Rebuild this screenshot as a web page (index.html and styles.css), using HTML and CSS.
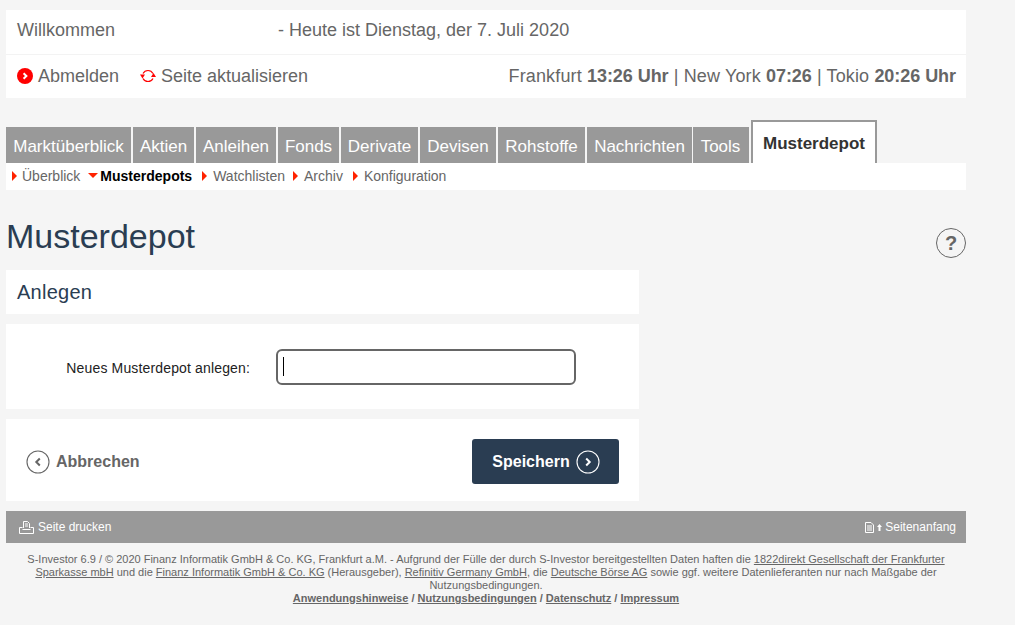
FILE: index.html
```html
<!DOCTYPE html>
<html lang="de">
<head>
<meta charset="utf-8">
<title>Musterdepot</title>
<link rel="stylesheet" href="styles.css">
</head>
<body>
<div class="page">
  <div class="wrap">
    <header class="top">
      <div class="top-row1">
        <span class="welcome">Willkommen</span>
        <span>- Heute ist Dienstag, der 7. Juli 2020</span>
      </div>
      <div class="top-row2">
        <a class="tool first">
          <svg class="ico-logout" viewBox="0 0 16 16"><circle cx="8" cy="8" r="8" fill="#f00"/><path d="M6.600 5.200 9.400 8 6.600 10.800" fill="none" stroke="#fff" stroke-width="2"/></svg>
          Abmelden</a>
        <a class="tool second">
          <svg class="ico-refresh" viewBox="0 0 16 16"><path d="M3 5.600A5.600 5.600 0 0 1 13 5.600M13 10.400A5.600 5.600 0 0 1 3 10.400" fill="none" stroke="#f00" stroke-width="1.200"/><path d="M0 6.500H5L2.500 10.500ZM16 9H11L13.500 5Z" fill="#f00"/></svg>
          Seite aktualisieren</a>
        <span class="clock">Frankfurt <b>13:26 Uhr</b> | New York <b>07:26</b> | Tokio <b>20:26 Uhr</b></span>
      </div>
    </header>

    <nav class="tabs">
      <a class="tab w1">Marktüberblick</a>
      <a class="tab w2">Aktien</a>
      <a class="tab w3">Anleihen</a>
      <a class="tab w4">Fonds</a>
      <a class="tab w5">Derivate</a>
      <a class="tab w6">Devisen</a>
      <a class="tab w7">Rohstoffe</a>
      <a class="tab w8">Nachrichten</a>
      <a class="tab w9">Tools</a>
      <a class="tab active">Musterdepot</a>
    </nav>
    <nav class="subnav">
      <a class="sub"><i class="arrow-r"></i>Überblick</a>
      <a class="sub current"><i class="arrow-d"></i>Musterdepots</a>
      <a class="sub"><i class="arrow-r"></i>Watchlisten</a>
      <a class="sub"><i class="arrow-r"></i>Archiv</a>
      <a class="sub"><i class="arrow-r"></i>Konfiguration</a>
    </nav>

    <div class="title-row">
      <h1>Musterdepot</h1>
      <span class="help">?</span>
    </div>

    <main class="col">
      <h2 class="panel head">Anlegen</h2>
      <div class="panel form">
        <label class="lbl">Neues Musterdepot anlegen:</label>
        <div class="input"><span class="caret"></span></div>
      </div>
      <div class="panel actions">
        <a class="cancel">
          <svg class="ico-circle" viewBox="0 0 24 24"><circle cx="12" cy="12" r="11" fill="none" stroke="#666" stroke-width="1.100"/><path d="M13.800 8.500 10.300 12 13.800 15.500" fill="none" stroke="#666" stroke-width="2"/></svg>
          Abbrechen</a>
        <a class="save">Speichern
          <svg class="ico-circle" viewBox="0 0 24 24"><circle cx="12" cy="12" r="11" fill="none" stroke="#fff" stroke-width="1.100"/><path d="M10.200 8.500 13.700 12 10.200 15.500" fill="none" stroke="#fff" stroke-width="2"/></svg>
        </a>
      </div>
    </main>

    <div class="bar">
      <a class="bar-link">
        <svg class="ico-print" viewBox="0 0 15 13"><path d="M4.500 7V.5H8.500L10.500 2.500V7M6 3H9M6 5H9M3.500 6.500H.5V12.500H14.500V6.500H11.500M3.500 8.500H11.500" fill="none" stroke="#fff"/></svg>
        Seite drucken</a>
      <a class="bar-link">
        <svg class="ico-doc" viewBox="0 0 9 11"><path d="M.5.500H6L8.500 3V10.500H.5ZM2 4h5M2 6h5M2 8h5" fill="none" stroke="#fff"/></svg>
        <svg class="ico-up" viewBox="0 0 5 7"><path d="M2.500 0 5 3H3.500V7H1.500V3H0Z" fill="#fff"/></svg>
        Seitenanfang</a>
    </div>

    <footer class="foot">
      <p>S-Investor 6.9 / © 2020 Finanz Informatik GmbH &amp; Co. KG, Frankfurt a.M. - Aufgrund der Fülle der durch S-Investor bereitgestellten Daten haften die <u>1822direkt Gesellschaft der Frankfurter Sparkasse mbH</u> und die <u>Finanz Informatik GmbH &amp; Co. KG</u> (Herausgeber), <u>Refinitiv Germany GmbH</u>, die <u>Deutsche Börse AG</u> sowie ggf. weitere Datenlieferanten nur nach Maßgabe der Nutzungsbedingungen.</p>
      <p class="links"><u>Anwendungshinweise</u> / <u>Nutzungsbedingungen</u> / <u>Datenschutz</u> / <u>Impressum</u></p>
    </footer>
  </div>
</div>
</body>
</html>
```
FILE: styles.css
```css
* { box-sizing: border-box; }
html, body { margin: 0; padding: 0; background: #fff; }
body { font-family: "Liberation Sans", Arial, sans-serif; color: #666; overflow: hidden; }
.page { width: 1015px; height: 625px; background: #f5f5f5; padding: 10px 0 0 6px; overflow: hidden; }
.wrap { width: 960px; }

.top { background: #fff; height: 88px; font-size: 18px; }
.top-row1 { height: 45px; display: flex; align-items: center; padding: 0 11px 4px; border-bottom: 1px solid #f3f3f3; }
.welcome { width: 261px; }
.top-row2 { height: 43px; display: flex; align-items: center; padding: 0 10px 1px 11px; }
.tool { display: flex; align-items: center; }
.first { width: 123px; }
.ico-logout { width: 16px; height: 16px; margin-right: 5px; }
.ico-refresh { width: 16px; height: 16px; margin-right: 5px; }
.clock { margin-left: auto; letter-spacing: .14px; }
.clock b { font-weight: bold; letter-spacing: -.05px; }

.tabs { display: flex; align-items: flex-end; gap: 2px; margin-top: 22px; height: 43px; }
.tab { height: 36px; background: #999; color: #fff; font-size: 17px; display: flex; align-items: center; justify-content: center; padding-top: 3px; }
.w1 { width: 125px; }
.w2 { width: 61px; }
.w3 { width: 80px; }
.w4 { width: 61px; }
.w5 { width: 77px; }
.w6 { width: 76px; }
.w7 { width: 87px; }
.w8 { width: 105px; }
.w9 { width: 56px; margin-left: -1px; padding-right: 1px; }
.tab.active { width: 126px; height: 43px; background: #fff; color: #333; font-weight: bold; font-size: 17px; border: 2px solid #999; border-bottom: 0; padding: 3px 0 0; }

.subnav { background: #fff; height: 27px; display: flex; align-items: center; font-size: 14px; padding: 0 0 2px 6px; gap: 8px; }
.sub { display: flex; align-items: center; }
.current { color: #000; font-weight: bold; margin-right: 2px; }
.arrow-r { width: 0; height: 0; border-left: 5px solid #f20; border-top: 5px solid transparent; border-bottom: 5px solid transparent; margin-right: 6px; }
.sub:first-child .arrow-r { margin-right: 5px; }
.arrow-d { width: 0; height: 0; border-top: 5px solid #f20; border-left: 5px solid transparent; border-right: 5px solid transparent; margin-right: 2px; }
.sub:last-child { margin-left: 2px; }

.title-row { display: flex; justify-content: space-between; align-items: flex-start; height: 80px; padding-top: 26px; }
h1 { margin: 0; font-size: 34px; line-height: 40px; font-weight: normal; color: #2a3d52; }
.help { width: 30px; height: 30px; margin-top: 12px; border: 1px solid #666; border-radius: 50%; display: flex; align-items: center; justify-content: center; font-weight: bold; font-size: 20px; }

.col { width: 633px; display: flex; flex-direction: column; gap: 10px; }
.panel { background: #fff; margin: 0; }
.head { height: 44px; font-size: 20px; letter-spacing: .25px; font-weight: normal; color: #2a3d52; padding: 0 11px; line-height: 44px; }
.form { height: 85px; display: flex; align-items: center; }
.lbl { width: 244px; font-size: 14px; letter-spacing: .15px; color: #222; text-align: right; flex-shrink: 0; margin-top: 3px; }
.input { width: 300px; height: 36px; margin-left: 26px; border: 2px solid #666; border-radius: 6px; display: flex; align-items: center; padding-left: 5px; }
.caret { width: 1px; height: 19px; background: #000; }
.actions { height: 82px; display: flex; align-items: center; justify-content: space-between; padding: 3px 20px 0; }
.cancel { display: flex; align-items: center; font-size: 16px; font-weight: bold; }
.cancel .ico-circle { margin-right: 6px; }
.ico-circle { width: 24px; height: 24px; }
.save { width: 147px; height: 45px; background: #2a3d52; color: #fff; border-radius: 3px; font-size: 16px; font-weight: bold; display: flex; align-items: center; justify-content: center; gap: 6px; padding-left: 1px; }

.bar { margin-top: 10px; height: 32px; background: #999; color: #fff; font-size: 12px; display: flex; align-items: center; justify-content: space-between; padding: 0 10px 0 13px; }
.bar-link { display: flex; align-items: center; }
.ico-print { width: 15px; height: 13px; margin-right: 4px; }
.ico-doc { width: 9px; height: 11px; margin-right: 3px; }
.ico-up { width: 5px; height: 7px; margin-right: 3px; }

.foot { font-size: 11px; line-height: 13px; text-align: center; color: #666; padding: 10px 15px 0; }
.foot p { margin: 0; }
.links { font-weight: bold; }
```
